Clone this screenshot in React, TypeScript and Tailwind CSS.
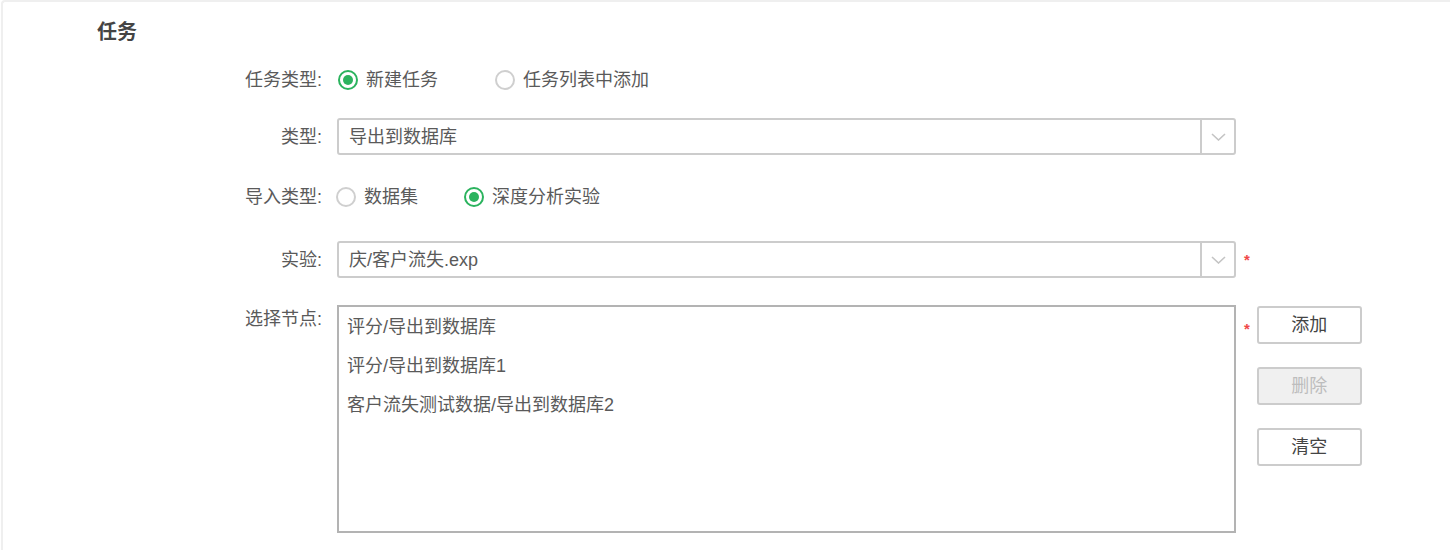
import React from "react";

const font = { fontFamily: '"Liberation Sans", "Noto Sans CJK SC", sans-serif' };

function Radio({ checked, label }: { checked?: boolean; label: string }) {
  return (
    <div className="flex items-center">
      <span
        className={`flex items-center justify-center w-[20px] h-[20px] rounded-full border-2 ${
          checked ? "border-[#2bb35e]" : "border-[#cfcfcf]"
        }`}
      >
        {checked && <span className="w-[10px] h-[10px] rounded-full bg-[#2bb35e]" />}
      </span>
      <span className="ml-[8px]">{label}</span>
    </div>
  );
}

function Select({ value }: { value: string }) {
  return (
    <div className="flex w-[899px] h-[37px] border-2 border-[#cccccc] rounded-[3px] bg-white">
      <div className="flex-1 flex items-center pl-[10px] text-[#5a5a5a]">{value}</div>
      <div className="w-[34px] flex items-center justify-center border-l-2 border-[#cccccc]">
        <svg width="15" height="8" viewBox="0 0 15 8" fill="none">
          <path d="M1 1l6.5 6L14 1" stroke="#c4c4c4" strokeWidth="1.6" />
        </svg>
      </div>
    </div>
  );
}

function Star() {
  return <span className="text-[#f04848] text-[15px] font-bold leading-none">*</span>;
}

function Label({ text }: { text: string }) {
  return <div className="w-[319px] text-right text-[#5a5a5a] shrink-0">{text}</div>;
}

export default function App() {
  const nodes = ["评分/导出到数据库", "评分/导出到数据库1", "客户流失测试数据/导出到数据库2"];
  return (
    <div className="w-[1450px] h-[550px] bg-white overflow-hidden" style={font}>
      <div className="ml-px h-full border-l-2 border-t-2 border-[#efefef] rounded-tl-[4px] text-[18px] leading-[24px]">
        <div className="pl-[94px] pt-[18px] text-[20px] font-bold text-[#444]">任务</div>

        <div className="flex items-center h-[38px] mt-[17px]">
          <Label text="任务类型:" />
          <div className="flex items-center pl-[16px] text-[#5a5a5a]">
            <div className="w-[157px]">
              <Radio checked label="新建任务" />
            </div>
            <Radio label="任务列表中添加" />
          </div>
        </div>

        <div className="flex items-center mt-[19px]">
          <Label text="类型:" />
          <div className="pl-[15px]">
            <Select value="导出到数据库" />
          </div>
        </div>

        <div className="flex items-center h-[38px] mt-[23px]">
          <Label text="导入类型:" />
          <div className="flex items-center pl-[14px] text-[#5a5a5a]">
            <div className="w-[128px]">
              <Radio label="数据集" />
            </div>
            <Radio checked label="深度分析实验" />
          </div>
        </div>

        <div className="flex items-center mt-[25px]">
          <Label text="实验:" />
          <div className="pl-[15px] flex items-center">
            <Select value="庆/客户流失.exp" />
            <span className="ml-[8px] -mt-[2px]">
              <Star />
            </span>
          </div>
        </div>

        <div className="flex mt-[27px]">
          <div className="pt-[2px]">
            <Label text="选择节点:" />
          </div>
          <div className="pl-[15px] flex">
            <div className="w-[899px] h-[228px] border-2 border-[#b3b3b3] text-[#5a5a5a]">
              {nodes.map((n) => (
                <div key={n} className="h-[39px] flex items-center pl-[8px]">
                  {n}
                </div>
              ))}
            </div>
            <div className="ml-[8px] pt-[11px]">
              <Star />
            </div>
            <div className="ml-[7px] pt-px flex flex-col gap-[23px]">
              <button className="w-[105px] h-[38px] border-2 border-[#cccccc] rounded-[3px] bg-white text-[#444]">
                添加
              </button>
              <button
                disabled
                className="w-[105px] h-[38px] border-2 border-[#cccccc] rounded-[3px] bg-[#f0f0f0] text-[#bdbdbd]"
              >
                删除
              </button>
              <button className="w-[105px] h-[38px] border-2 border-[#cccccc] rounded-[3px] bg-white text-[#444]">
                清空
              </button>
            </div>
          </div>
        </div>
      </div>
    </div>
  );
}
